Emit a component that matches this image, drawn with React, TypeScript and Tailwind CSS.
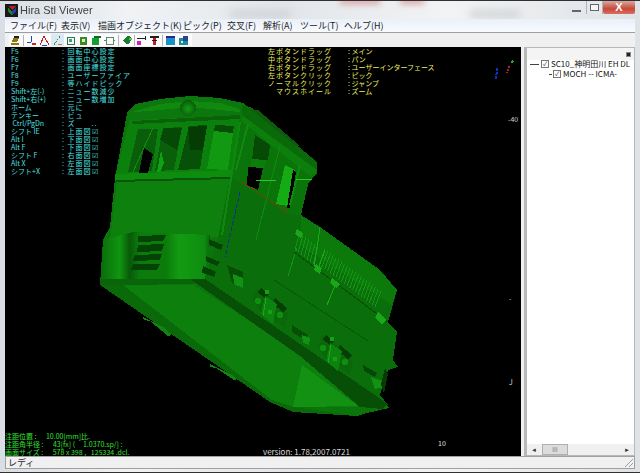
const menuItems = [
	{ title: "ファイル(F)", width: "w-[51px]" },
	{ title: "表示(V)", width: "w-[37px]" },
	{ title: "描画オブジェクト(K)", width: "w-[85px]" },
	{ title: "ピック(P)", width: "w-[44px]" },
	{ title: "交叉(F)", width: "w-[36px]" },
	{ title: "解析(A)", width: "w-[37px]" },
	{ title: "ツール(T)", width: "w-[44px]" },
	{ title: "ヘルプ(H)", width: "w-[44px]" }
];

const keyRows = [
	["F5", "回転中心設定"],
	["F6", "画面中心設定"],
	["F7", "画面座標設定"],
	["F8", "ユーザーファイア"],
	["F9", "等ハイドピック"],
	["Shift+左(-)", "ニュー数減少"],
	["Shift+右(+)", "ニュー数増加"],
	["ホーム", "元に"],
	["テンキー", "ビュ"],
	[" Ctrl/PgDn", "ズ　　.."],
	["シフト IE", "上面図☑"],
	["Alt I", "下面図☑"],
	["Alt F", "下面図☑"],
	["シフト F", "右面図☑"],
	["Alt X", "左面図☑"],
	["シフト+X", "左面図☑"]
];

const mouseRows = [
	["左ボタンドラッグ", "メイン"],
	["中ボタンドラッグ", "パン"],
	["右ボタンドラッグ", "ユーザーインターフェース"],
	["左ボタンクリック", "ピック"],
	["ノーマルクリック", "ジャンプ"],
	["　マウスホイール", "ズーム"]
];

// model faces in screen coordinates, painted back to front
const faces: [string, string][] = [
	// whole silhouette
	["127,113 135,104 160,99 190,96 220,98 243,103 317,162 317,173 307,185 301,215 320,227 380,270 397,290 388,322 397,332 393,360 398,367 388,370 380,395 389,408 367,413 357,416 293,412 270,402 100,285 103,240 110,227 115,178", "#0b740b"],
	// roof side rail
	["240,104 252,108 317,162 317,173 244,118", "#0a6a0a"],
	["250,109 258,110 300,146 296,146", "#0c5c0c"],
	["243,116 317,170 310,178 240,126", "#0c7e0c"],
	// cab side
	["240,120 310,176 301,215 288,214 240,182", "#0a730a"],
	// hood side
	["230,178 240,182 288,214 301,215 320,227 380,270 397,290 388,322 397,332 393,360 398,367 388,370 380,395 388,405 205,279 218,237", "#0a6f0a"],
	["301,216 320,227 380,270 397,290 392,305 300,245", "#0b7a0b"],
	// cab front, upper and lower
	["130,118 240,116 232,174 115,178", "#0c800c"],
	["117,181 230,178 218,237 110,240", "#0d800d"],
	// roof front
	["127,113 135,104 160,99 190,96 220,98 243,104 240,116 130,120", "#0c770c"],
	["132,112 160,104 190,101 220,103 240,109 240,112 190,107 150,111", "#0f8a0f"],
	["132,121 240,115 240,119 133,124", "#0a610a"],
	// sill under the windows
	["115,174 232,170 230,178 115,180", "#0e8c0e"],
	["116,180 230,177 230,179 116,182", "#085508"],
	// windows
	["138,129 158,129 152,171 128,172", "#0a5d0a"],
	["163,128 182,127 174,170 155,171", "#0a600a"],
	["189,126 207,125 200,169 178,170", "#075007"],
	["215,125 234,126 228,170 207,169", "#119a11"],
	["215,125 234,126 233,133 214,131", "#074c07"],
	["164,128 182,128 177,150 160,140", "#064806"],
	["188,127 207,126 203,150 190,150", "#043c04"],
	["144,148 153,154 148,173 139,173", "#000000"],
	["161,150 164,163 160,172 157,172", "#11a011"],
	// side windows
	["255,135 270,145 268,160 252,160", "#064a06"],
	["248,167 263,168 258,190 247,185", "#000000"],
	["251,159 266,160 264,168 251,167", "#0b7d0b"],
	["285,165 295,170 288,206 276,204", "#15ab15"],
	["293,170 296,172 290,208 287,208", "#000000"],
	// nose of the hood
	["103,240 133,232 210,235 205,279 120,282 100,285", "url(#nose)"],
	// under-frame faces
	["100,285 123,285 272,400 293,407 357,416 293,412 270,402", "#0a6a0a"],
	["123,285 193,285 300,353 360,407 293,407 272,400", "#0d7f0d"],
	["302,365 358,406 293,407", "#129112"],
	["100,279 204,279 193,284 123,285 100,285", "#0a640a"],
	// dark band under the hood
	["190,279 205,279 388,404 382,409 360,407 300,356", "#074f07"],
	["143,317 165,328 171,335 168,336 150,321 144,320", "#108510"],
	["210,364 232,375 237,379 234,380 216,368 210,367", "#108510"],
	// dark sockets on the hood side
	["227,265 243,272 243,288 232,283", "#074f07"],
	["233,274 243,278 243,288 234,284", "#129112"],
	["292,325 308,335 305,340 292,332", "#074f07"],
	["302,335 310,338 309,345 303,343", "#129112"],
	["363,365 377,373 375,377 364,371", "#064606"],
	["371,377 382,381 384,387 375,389", "#129112"],
	["385,368 388,374 384,393 381,384", "#043c04"]
];

const noseSlots = [
	"138,236 166,235 163,241 138,242",
	"138,245 164,244 162,251 137,252",
	"135,255 162,254 160,260 133,261",
	"133,264 160,264 157,270 131,270"
];

const sideSlots = [
	"209,239 223,245 221,250 209,245",
	"206,256 220,262 217,266 206,261",
	"203,266 216,272 214,277 202,273"
];

const Bracket = ({ x, y }: { x: number; y: number }) => (
	<g transform={`translate(${x} ${y})`}>
		<polygon points="4,0 28,16 35,26 32,40 8,24 0,12" fill="#0a680a" />
		<polygon points="8,0 16,6 12,10 4,4" fill="#053f05" />
		<polygon points="22,10 34,20 30,24 20,16" fill="#053f05" />
		<polygon points="12,8 24,16 20,36 8,26" fill="#0c830c" />
		<circle cx="14" cy="4" r="2.5" fill="#15a015" />
		<circle cx="5" cy="13" r="3" fill="#0f8f0f" />
		<circle cx="27" cy="27" r="3" fill="#0f8f0f" />
		<circle cx="17" cy="24" r="2.5" fill="#15a015" />
		<line x1="13" y1="10" x2="10" y2="28" stroke="#1aa81a" />
	</g>
);

const Locomotive = () => (
	<svg
		className="absolute inset-0"
		width={516}
		height={409}
		viewBox="5 47 516 409"
		shapeRendering="crispEdges"
	>
		<defs>
			<linearGradient id="nose" x1="0" y1="0" x2="1" y2="0">
				<stop offset="0" stopColor="#0a6a0a" />
				<stop offset="0.18" stopColor="#0f960f" />
				<stop offset="0.27" stopColor="#085a08" />
				<stop offset="0.36" stopColor="#0b7c0b" />
				<stop offset="0.6" stopColor="#0b7c0b" />
				<stop offset="0.72" stopColor="#129c12" />
				<stop offset="0.95" stopColor="#0f8c0f" />
				<stop offset="1" stopColor="#0a640a" />
			</linearGradient>
			<radialGradient id="lamp" cx="0.5" cy="0.55" r="0.55">
				<stop offset="0" stopColor="#159a15" />
				<stop offset="1" stopColor="#085a08" />
			</radialGradient>
		</defs>
		{faces.map(([points, fill]) => (
			<polygon key={points} points={points} fill={fill} />
		))}
		{noseSlots.map((points) => (
			<polygon key={points} points={points} fill="#054205" />
		))}
		{sideSlots.map((points) => (
			<polygon key={points} points={points} fill="#054205" />
		))}
		<circle cx={188} cy={108} r={8} fill="url(#lamp)" />
		<Bracket x={253} y={288} />
		<Bracket x={318} y={335} />
		{/* hood grille */}
		{Array.from({ length: 7 }, (_, i) => (
			<line
				key={`a${i}`}
				x1={300 + i * 3}
				y1={232 + i * 2.4}
				x2={295 + i * 3}
				y2={250 + i * 2.4}
				stroke="#159515"
			/>
		))}
		{Array.from({ length: 21 }, (_, i) => (
			<line
				key={`b${i}`}
				x1={325 + i * 2.8}
				y1={249 + i * 2.1}
				x2={319 + i * 2.8}
				y2={265 + i * 2.1}
				stroke="#159515"
			/>
		))}
		{/* panel seams */}
		<line x1="320" y1="227" x2="314" y2="268" stroke="#1aa81a" />
		<line x1="325" y1="250" x2="317" y2="272" stroke="#1aa81a" />
		<line x1="336" y1="283" x2="327" y2="305" stroke="#1aa81a" />
		<line x1="297" y1="248" x2="288" y2="276" stroke="#159515" />
		<line x1="294" y1="252" x2="388" y2="322" stroke="#064a06" />
		<line x1="274" y1="280" x2="368" y2="341" stroke="#085808" />
		<line x1="240" y1="122" x2="222" y2="235" stroke="#0d8a0d" strokeWidth={2} />
		<line x1="248" y1="124" x2="236" y2="170" stroke="#0f8a0f" strokeWidth={2} />
		<line x1="280" y1="146" x2="256" y2="240" stroke="#0f8a0f" />
		<line x1="300" y1="165" x2="290" y2="205" stroke="#0f8a0f" strokeWidth={2} />
		<line x1="153" y1="128" x2="133" y2="172" stroke="#0f8f0f" />
		<polygon points="297,229 303,233 301,238 295,234" fill="#1aa81a" />
		<polygon points="316,264 322,268 320,274 314,270" fill="#1aa81a" />
		<polygon points="332,278 340,284 337,288 330,283" fill="#1aa81a" />
		<polygon points="378,312 386,320 382,325 375,318" fill="#1aa81a" />
		{/* axis marks */}
		<line x1="256" y1="180.5" x2="276" y2="180.5" stroke="#22cc22" />
		<line x1="296" y1="179.5" x2="312" y2="179.5" stroke="#22cc22" />
		<line x1="242" y1="182" x2="288" y2="213" stroke="#8a3010" strokeDasharray="3 1" />
		<line x1="240" y1="192" x2="225" y2="257" stroke="#0a3090" strokeDasharray="4 2" />
		<line x1="497" y1="68" x2="496" y2="80" stroke="#1030c0" strokeWidth={2} strokeDasharray="3 1" />
		<line x1="509" y1="66" x2="507" y2="73" stroke="#b02020" strokeWidth={2} strokeDasharray="2 1" />
		<line x1="511" y1="63" x2="513" y2="61" stroke="#22aa22" strokeWidth={2} />
	</svg>
);

const ViewportText = () => (
	<div className="absolute inset-0 font-['Noto_Sans_CJK_JP',sans-serif] text-[7px] leading-[8px]">
		<div className="absolute left-[6px] top-0 grid grid-cols-[51px_1fr] text-[#4fe0e0]">
			{keyRows.map(([key, action]) => (
				<div key={key + action} className="contents">
					<span className="h-[8px] whitespace-pre">{key}</span>
					<span className="h-[8px] whitespace-pre tracking-[1px]">: {action}</span>
				</div>
			))}
		</div>
		<div className="absolute left-[263px] top-0 grid grid-cols-[80px_1fr] text-[#f0f060]">
			{mouseRows.map(([key, action]) => (
				<div key={key} className="contents">
					<span className="h-[8px] whitespace-pre tracking-[1px]">{key}</span>
					<span className="h-[8px] whitespace-pre">: {action}</span>
				</div>
			))}
		</div>
		<span className="absolute left-[503px] top-[68px] text-[#d0d0d0]">-40</span>
		<span className="absolute left-[504px] top-[247px] text-[#d0d0d0]">-</span>
		<span className="absolute left-[504px] top-[331px] text-[#d0d0d0]">J</span>
		<span className="absolute left-[433px] top-[392px] text-[#e0e0e0]">10</span>
		<span className="absolute left-[258px] top-[401px] whitespace-pre text-[8px] text-[#d8d8d8]">
			version: 1.78,2007.0721
		</span>
		<div className="absolute bottom-0 left-0 whitespace-pre text-[#35e035]">
			<div>注距位置 :      10.00[mm]比.</div>
			<div>注距角半径 :      43[fx] (     1.0370.sp/] :</div>
			<div>画面サイズ :      578 x 398 ,   125334 .dcl.</div>
		</div>
	</div>
);

const ToolIcon = ({ children, active }: { children: React.ReactNode; active?: boolean }) => (
	<div className={`flex h-[12px] w-[13px] items-center justify-center ${active ? "bg-[#dce8f5]" : ""}`}>
		<svg width={11} height={11} viewBox="0 0 11 11" shapeRendering="crispEdges">
			{children}
		</svg>
	</div>
);

const Toolbar = () => (
	<div className="flex h-[14px] items-center bg-[#f0f0f0] pl-[4px]">
		<div className="flex h-[12px] items-center bg-[#fbfbfb] pr-[2px]">
			<ToolIcon>
				<path d="M1 8h8v2H1zM3 3h6L7 7H2z" fill="#8a7a10" />
				<path d="M4 1h5v2H4z" fill="#222" />
			</ToolIcon>
			<div className="mx-px h-[11px] w-px bg-[#b4b4b4]" />
			<ToolIcon>
				<path d="M5 1v6M5 7H1" stroke="#2040c0" fill="none" />
				<path d="M6 8h4v2H6z" fill="#d02020" />
			</ToolIcon>
			<ToolIcon>
				<path d="M5 1L1 10M5 1l5 9" stroke="#c02020" fill="none" />
				<path d="M3 10h5" stroke="#2040c0" />
			</ToolIcon>
			<ToolIcon active>
				<path d="M8 1L2 10" stroke="#20a020" strokeDasharray="2 1" fill="none" />
				<path d="M6 9h4" stroke="#d08020" />
			</ToolIcon>
			<ToolIcon>
				<path d="M2 2h7v7H2z" fill="none" stroke="#207a50" />
				<path d="M4 4h3v3H4z" fill="#40a070" />
			</ToolIcon>
			<ToolIcon>
				<path d="M2 2h7v8H2z" fill="#3a8a20" />
				<path d="M4 4h3v3H4z" fill="#e0e8d0" />
			</ToolIcon>
			<ToolIcon>
				<path d="M1 3h7v7H1z" fill="#10a030" />
				<path d="M3 1h7v2H3z" fill="#0c6a20" />
			</ToolIcon>
			<ToolIcon>
				<path d="M2 2h7v7H2zM0 5h2M9 5h2" fill="none" stroke="#5a8a70" />
			</ToolIcon>
			<div className="mx-[2px] h-[11px] w-px bg-[#b4b4b4]" />
			<ToolIcon>
				<path d="M1 5l4-4h3l2 3-3 5H4z" fill="#1a7a30" />
				<path d="M7 3h3v2H7z" fill="#60c060" />
			</ToolIcon>
			<div className="h-[11px] w-px bg-[#b4b4b4]" />
			<ToolIcon>
				<path d="M1 3h8M9 1v4" stroke="#222" fill="none" />
				<path d="M1 6h4v4H1z" fill="#d020c0" />
			</ToolIcon>
			<ToolIcon>
				<path d="M1 1h9v2H1z" fill="#222" />
				<path d="M4 3h3v7H4z" fill="#c02020" />
				<path d="M3 5h5" stroke="#222" />
			</ToolIcon>
			<div className="mx-px h-[11px] w-px bg-[#b4b4b4]" />
			<ToolIcon>
				<path d="M1 3h9v7H1z" fill="#1890c8" />
				<path d="M1 1h9v2H1z" fill="#302090" />
			</ToolIcon>
			<ToolIcon>
				<path d="M1 3h9v7H1z" fill="#189090" />
				<path d="M5 1h5v5H5z" fill="#3040a0" />
				<path d="M3 6h2v2H3z" fill="#d0f0f0" />
			</ToolIcon>
		</div>
	</div>
);

const TitleBar = () => (
	<div className="relative flex h-[19px] items-center overflow-hidden border-t border-[#303030] pl-[5px]">
		{/* smudges of the desktop behind the glass */}
		<div className="absolute left-[340px] top-[-3px] h-[6px] w-[40px] bg-[#d8a0a0] blur-[3px]" />
		<div className="absolute left-[400px] top-[-3px] h-[6px] w-[24px] bg-[#d8a0a0] blur-[3px]" />
		<div className="absolute left-[230px] top-[10px] h-[6px] w-[60px] bg-[#c8ccd0] blur-[4px]" />
		<div className="absolute left-[470px] top-[10px] h-[6px] w-[50px] bg-[#c8ccd0] blur-[4px]" />
		<div className="relative flex h-[13px] w-[13px] items-center justify-center bg-[#181818]">
			<svg width={10} height={10} viewBox="0 0 10 10" shapeRendering="crispEdges">
				<path d="M1 1h8L5 5z" fill="#b02020" />
				<path d="M1 3l4 3v4L1 7z" fill="#1a8030" />
				<path d="M9 3L5 6v4l4-3z" fill="#2040a0" />
			</svg>
		</div>
		<span className="relative ml-[2px] font-['Liberation_Sans',sans-serif] text-[11px] text-[#404040] blur-[0.4px]">
			Hira Stl Viewer
		</span>
		<div className="absolute right-[5px] top-0 flex h-[13px] items-start">
			<div className="flex h-[13px] w-[20px] items-end justify-center bg-[#e4e8ec] pb-[2px]">
				<div className="h-[2px] w-[9px] border border-[#666] bg-white" />
			</div>
			<div className="flex h-[13px] w-[17px] items-center justify-center border-x border-[#b0b4b8] bg-[#e4e8ec]">
				<div className="h-[7px] w-[9px] border border-[#666] bg-white/60" />
			</div>
			<div className="flex h-[13px] w-[32px] items-center justify-center rounded-b-[2px] bg-[linear-gradient(#d8a8a0,#c84838_60%,#d87060)] font-['Liberation_Sans',sans-serif] text-[11px] font-bold leading-none text-white">
				X
			</div>
		</div>
	</div>
);

const TreeCheck = () => (
	<span className="flex h-[8px] w-[8px] shrink-0 items-center justify-center border border-[#777] bg-white text-[6px] leading-none text-[#222]">
		✓
	</span>
);

const TreePanel = () => (
	<div className="flex w-[111px] flex-col border border-l-[3px] border-[#b8b8b8] bg-white font-['Noto_Sans_CJK_JP',sans-serif] text-[8px] leading-[8px] text-[#111]">
		<div className="flex h-[12px] items-center justify-end bg-[#f4f4f4] pr-[3px] text-[#555]">
			<span className="ml-[2px] h-[5px] w-[5px] border border-[#888] bg-[#222]" />
		</div>
		<div className="flex flex-col gap-[2px]">
			<div className="flex h-[8px] items-center whitespace-nowrap pl-[3px]">
				<span className="mr-[2px] h-px w-[9px] bg-[#444]" />
				<TreeCheck />
				<span className="ml-[2px]">SC10_神明田川 EH DL</span>
			</div>
			<div className="flex h-[8px] items-center whitespace-nowrap pl-[22px]">
				<span className="mr-px h-px w-[3px] bg-[#444]" />
				<TreeCheck />
				<span className="ml-[2px]">MOCH -- ICMA-</span>
			</div>
		</div>
		<div className="mt-auto flex h-[11px] items-center bg-[#f0f0f0] px-[4px] text-[#333]">
			<span className="text-[6px]">◄</span>
			<div className="ml-[5px] flex h-[11px] w-[26px] items-center justify-center border border-[#b0b0b0] bg-[#dcdcdc] text-[6px] text-[#777]">
				III
			</div>
			<span className="ml-auto text-[6px]">►</span>
		</div>
	</div>
);

export default function App() {
	return (
		<div className="flex h-[473px] w-[640px] flex-col overflow-hidden border-b border-[#303030] bg-[linear-gradient(90deg,#d8dee4,#f0f2f4_20%,#e2e6ea_45%,#f2f3f4_70%,#dfe3e6)] px-[5px]">
			<div className="-mx-[5px]">
				<TitleBar />
			</div>
			<div className="flex h-[14px] items-center border-b border-[#9aa0a8] bg-[linear-gradient(#eaf0fa,#f8fafd)] pl-[5px] font-['Noto_Sans_CJK_JP',sans-serif] text-[9px] leading-none text-[#222]">
				{menuItems.map((item) => (
					<span key={item.title} className={`${item.width} whitespace-nowrap`}>
						{item.title}
					</span>
				))}
			</div>
			<Toolbar />
			<div className="flex h-[409px] items-stretch bg-[#f0f0f0]">
				<div className="relative w-[516px] bg-black">
					<Locomotive />
					<ViewportText />
				</div>
				<div className="ml-[3px] flex">
					<TreePanel />
				</div>
			</div>
			<div className="flex h-[13px] items-center justify-between border border-[#a0a0a0] bg-[#f0f0f0] pl-[2px] font-['Noto_Sans_CJK_JP',sans-serif] text-[9px] text-[#222]">
				<span>レディ</span>
				<svg width={12} height={11} viewBox="0 0 12 11">
					<path d="M11 2L3 10M11 6l-4 4" stroke="#a0a0a0" />
				</svg>
			</div>
		</div>
	);
}
